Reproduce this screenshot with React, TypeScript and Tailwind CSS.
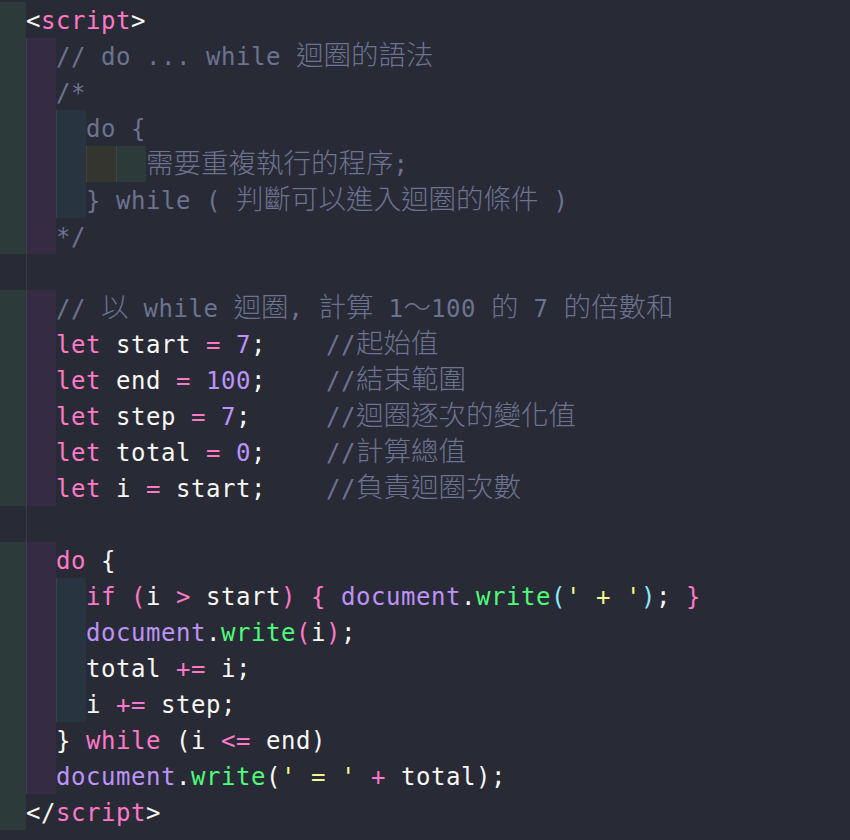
import React from 'react';

type Tone = 'fg' | 'kw' | 'num' | 'fn' | 'str' | 'br' | 'cm';
type Tok = [string, Tone];

const TONE: Record<Tone, string> = {
  fg: 'text-[#f8f8f2]',
  kw: 'text-[#ff79c6]',
  num: 'text-[#bd93f9]',
  fn: 'text-[#50fa7b]',
  str: 'text-[#f1fa8c]',
  br: 'text-[#8be9fd]',
  cm: 'text-[#6c7390]',
};

// indent-rainbow fills, level by level
const BLOCKS = ['bg-[#352c43]', 'bg-[#28343f]', 'bg-[#34352f]', 'bg-[#2c3a3a]'];

interface CodeLine {
  indent: number;
  toks: Tok[];
}

const lines: CodeLine[] = [
  { indent: 0, toks: [['<', 'fg'], ['script', 'kw'], ['>', 'fg']] },
  { indent: 1, toks: [['// do ... while 迴圈的語法', 'cm']] },
  { indent: 1, toks: [['/*', 'cm']] },
  { indent: 2, toks: [['do {', 'cm']] },
  { indent: 4, toks: [['需要重複執行的程序;', 'cm']] },
  { indent: 2, toks: [['} while ( 判斷可以進入迴圈的條件 )', 'cm']] },
  { indent: 1, toks: [['*/', 'cm']] },
  { indent: 0, toks: [] },
  { indent: 1, toks: [['// 以 while 迴圈, 計算 1～100 的 7 的倍數和', 'cm']] },
  {
    indent: 1,
    toks: [['let', 'kw'], [' start ', 'fg'], ['=', 'kw'], [' ', 'fg'], ['7', 'num'], [';    ', 'fg'], ['//起始值', 'cm']],
  },
  {
    indent: 1,
    toks: [['let', 'kw'], [' end ', 'fg'], ['=', 'kw'], [' ', 'fg'], ['100', 'num'], [';    ', 'fg'], ['//結束範圍', 'cm']],
  },
  {
    indent: 1,
    toks: [['let', 'kw'], [' step ', 'fg'], ['=', 'kw'], [' ', 'fg'], ['7', 'num'], [';     ', 'fg'], ['//迴圈逐次的變化值', 'cm']],
  },
  {
    indent: 1,
    toks: [['let', 'kw'], [' total ', 'fg'], ['=', 'kw'], [' ', 'fg'], ['0', 'num'], [';    ', 'fg'], ['//計算總值', 'cm']],
  },
  {
    indent: 1,
    toks: [['let', 'kw'], [' i ', 'fg'], ['=', 'kw'], [' start;    ', 'fg'], ['//負責迴圈次數', 'cm']],
  },
  { indent: 0, toks: [] },
  { indent: 1, toks: [['do', 'kw'], [' {', 'fg']] },
  {
    indent: 2,
    toks: [
      ['if', 'kw'], [' ', 'fg'], ['(', 'kw'], ['i ', 'fg'], ['>', 'kw'], [' start', 'fg'], [')', 'kw'], [' ', 'fg'],
      ['{', 'kw'], [' ', 'fg'], ['document', 'num'], ['.', 'fg'], ['write', 'fn'], ['(', 'br'], ["' + '", 'str'],
      [')', 'br'], ['; ', 'fg'], ['}', 'kw'],
    ],
  },
  {
    indent: 2,
    toks: [['document', 'num'], ['.', 'fg'], ['write', 'fn'], ['(', 'kw'], ['i', 'fg'], [')', 'kw'], [';', 'fg']],
  },
  { indent: 2, toks: [['total ', 'fg'], ['+=', 'kw'], [' i;', 'fg']] },
  { indent: 2, toks: [['i ', 'fg'], ['+=', 'kw'], [' step;', 'fg']] },
  {
    indent: 1,
    toks: [['} ', 'fg'], ['while', 'kw'], [' (i ', 'fg'], ['<=', 'kw'], [' end)', 'fg']],
  },
  {
    indent: 1,
    toks: [
      ['document', 'num'], ['.', 'fg'], ['write', 'fn'], ['(', 'fg'], ["' = '", 'str'], [' ', 'fg'], ['+', 'kw'],
      [' total);', 'fg'],
    ],
  },
  { indent: 0, toks: [['</', 'fg'], ['script', 'kw'], ['>', 'fg']] },
];

const CJK = /([\u3000-\u9fff\uff00-\uffef]+)/;

// CJK runs get their own font and size so they keep the editor's wider cell
function Run({ text, tone }: { text: string; tone: Tone }) {
  const parts = text.split(CJK);
  return (
    <span className={TONE[tone]}>
      {parts.map((p, i) =>
        CJK.test(p) ? (
          <span
            key={i}
            className="font-['Noto_Sans_CJK_TC',sans-serif] text-[27.5px] font-light tracking-normal leading-[0]"
          >
            {p}
          </span>
        ) : (
          <React.Fragment key={i}>{p}</React.Fragment>
        )
      )}
    </span>
  );
}

function Row({ line }: { line: CodeLine }) {
  const blank = line.toks.length === 0;
  return (
    <div className="flex h-[36px]">
      <div className={`w-[26px] shrink-0 ${blank ? '' : 'bg-[#2c3a3a]'}`} />
      {blank && <div className="w-px shrink-0 bg-[#393c48]" />}
      {BLOCKS.slice(0, line.indent).map((bg) => (
        <div key={bg} className={`w-[30px] shrink-0 border-l border-white/[0.07] ${bg}`} />
      ))}
      <div className="whitespace-pre pt-px leading-[36px]">
        {line.toks.map(([t, tone], i) => (
          <Run key={i} text={t} tone={tone} />
        ))}
      </div>
    </div>
  );
}

export default function App() {
  return (
    <div className="min-h-screen w-full bg-[#282a36] pt-[2px] font-['DejaVu_Sans_Mono','Noto_Sans_CJK_TC',monospace] text-[24px] tracking-[0.55px] text-[#f8f8f2]">
      {lines.map((l, i) => (
        <Row key={i} line={l} />
      ))}
    </div>
  );
}
